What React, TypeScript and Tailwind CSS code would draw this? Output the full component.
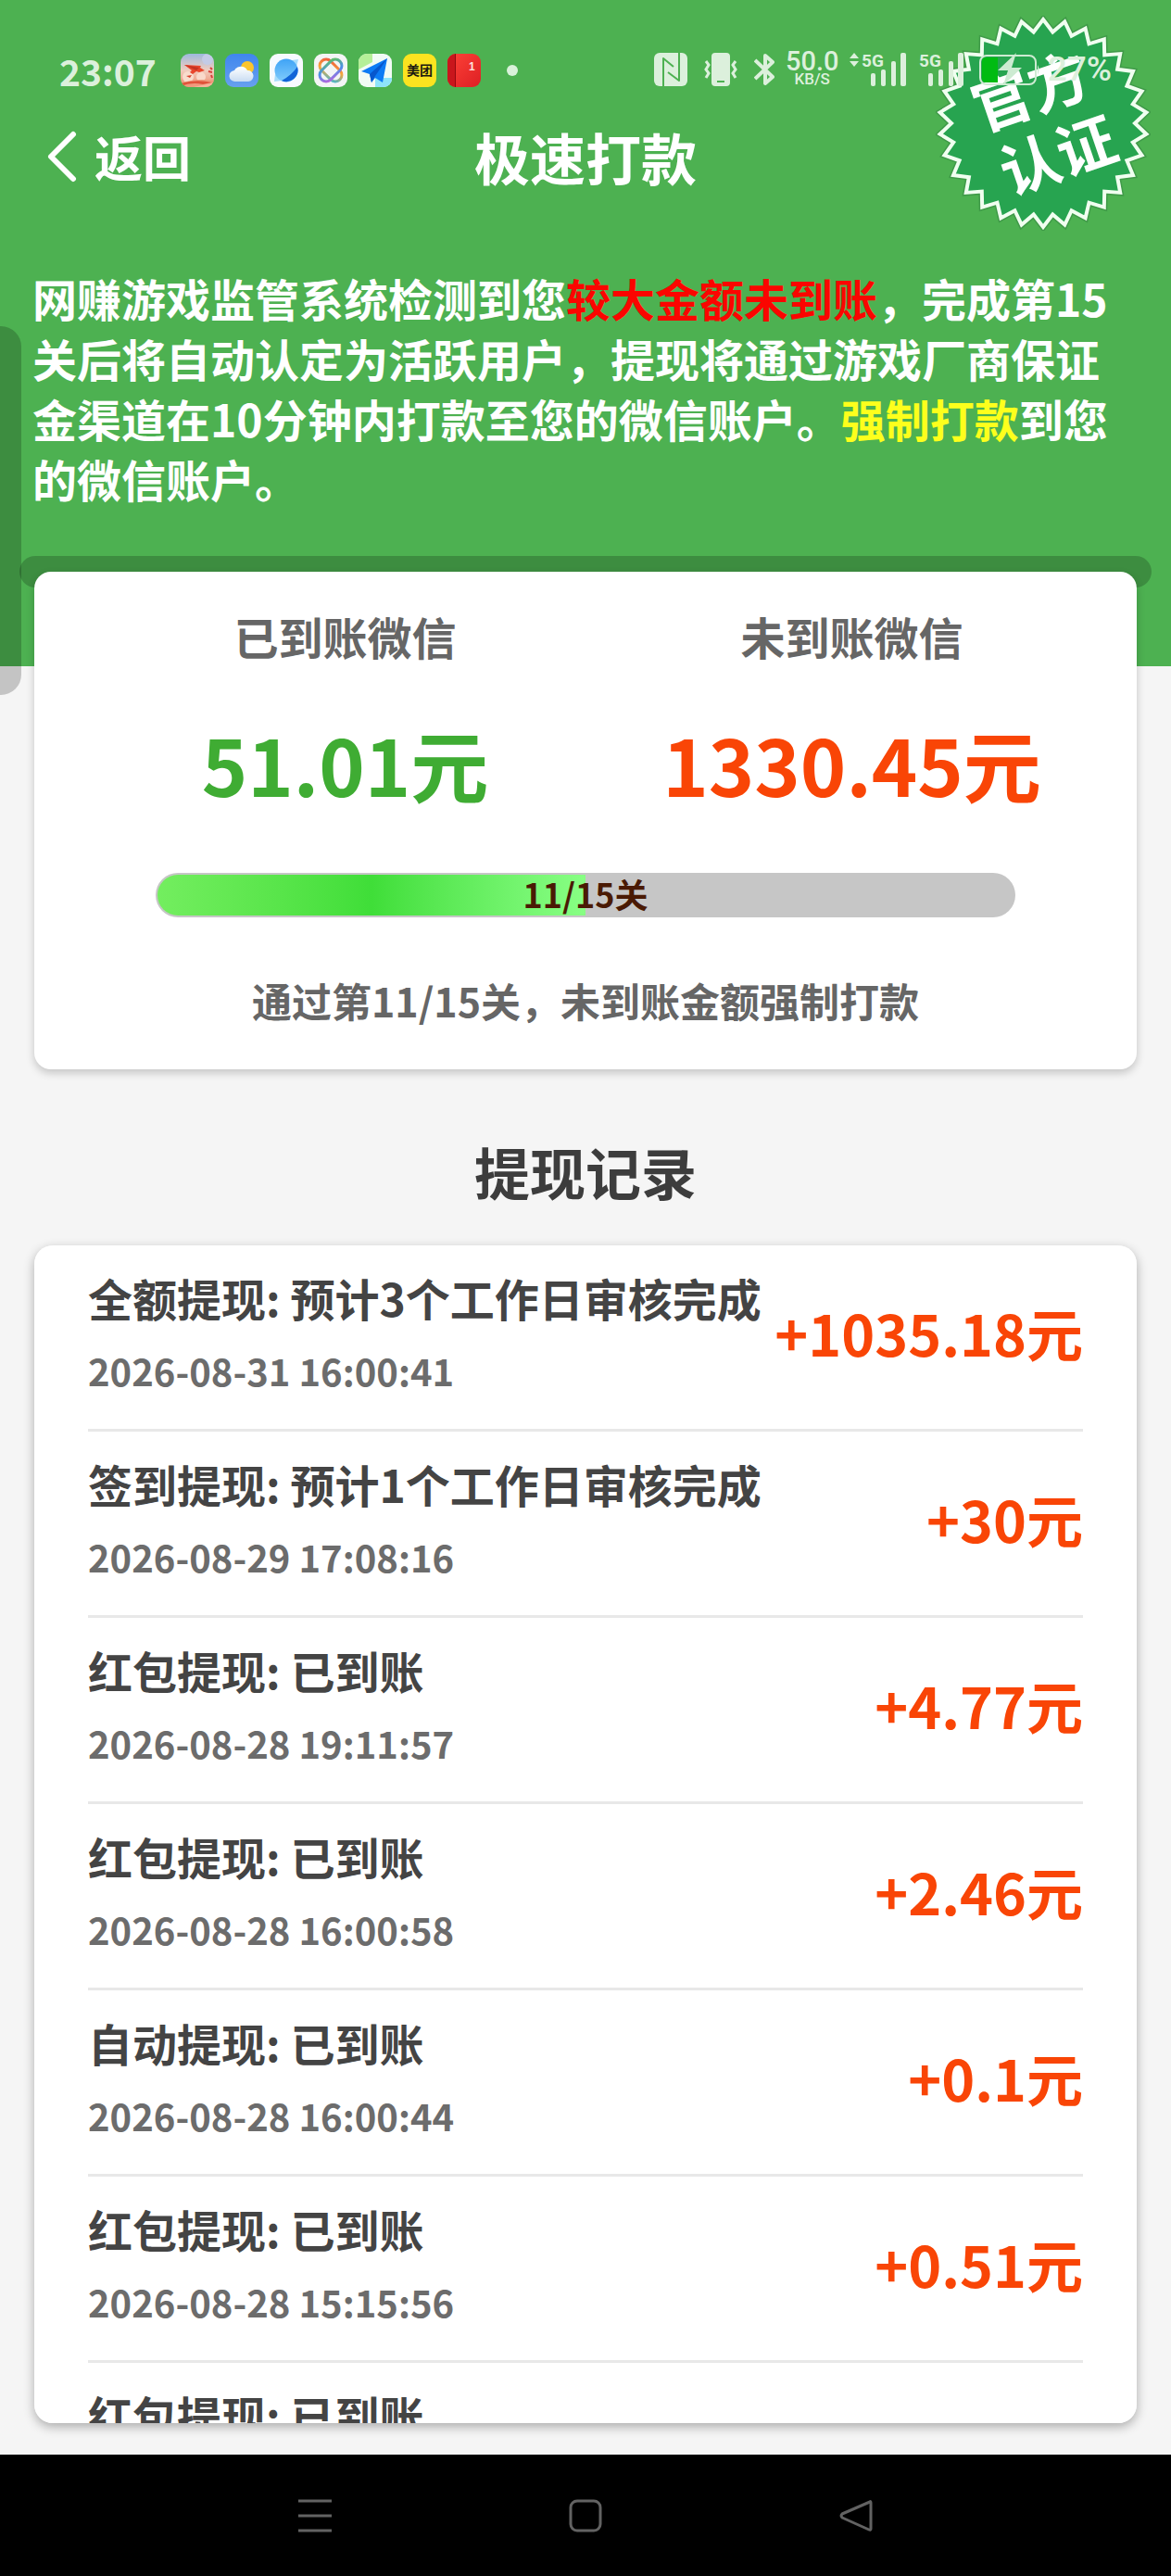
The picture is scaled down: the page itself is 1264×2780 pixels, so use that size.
import type { ReactNode } from 'react';

interface WithdrawRecord {
    title: string;
    time: string;
    amount: string;
}

const records: WithdrawRecord[] = [
    { title: '全额提现: 预计3个工作日审核完成', time: '2026-08-31 16:00:41', amount: '+1035.18元' },
    { title: '签到提现: 预计1个工作日审核完成', time: '2026-08-29 17:08:16', amount: '+30元' },
    { title: '红包提现: 已到账', time: '2026-08-28 19:11:57', amount: '+4.77元' },
    { title: '红包提现: 已到账', time: '2026-08-28 16:00:58', amount: '+2.46元' },
    { title: '自动提现: 已到账', time: '2026-08-28 16:00:44', amount: '+0.1元' },
    { title: '红包提现: 已到账', time: '2026-08-28 15:15:56', amount: '+0.51元' },
    { title: '红包提现: 已到账', time: '2026-08-28 15:02:10', amount: '+0.36元' },
];

function AppIcon({ children }: { children: ReactNode }) {
    return (
        <svg viewBox="0 0 36 36" className="h-9 w-9 rounded-[9px]" aria-hidden="true">
            {children}
        </svg>
    );
}

function NotificationIcons() {
    return (
        <div className="flex items-center gap-3">
            <AppIcon>
                <defs>
                    <linearGradient id="sky" x1="0" y1="0" x2="0" y2="1">
                        <stop offset="0" stopColor="#9db9dc" />
                        <stop offset="0.5" stopColor="#f1cdbf" />
                        <stop offset="1" stopColor="#ee8a6b" />
                    </linearGradient>
                </defs>
                <rect width="36" height="36" fill="url(#sky)" />
                <circle cx="29" cy="6" r="6" fill="#c3cbe6" />
                <circle cx="8" cy="25" r="6" fill="#f8dccd" />
                <circle cx="22" cy="25" r="5" fill="#f9d9cb" />
                <path d="M0 32 Q16 26 36 29 V36 H0 Z" fill="#ef9a7d" />
                <path d="M0 32 Q16 27 34 31 L24 33 Q12 30 0 35 Z" fill="#e0533a" />
                <path d="M14 36 L36 31 V36 Z" fill="#f6b49b" />
                <path d="M4 12 L22 13 L21 15 L26 18 L20 20 L17 19 L13 22 L10 20 L12 18 Z" fill="#e8452c" />
                <path d="M4 12 L20 15 L17 18 Z" fill="#c53422" />
                <path d="M6 24 L12 23 L10 26 Z" fill="#d8452f" />
                <path d="M32 15 l2 2 M30 19 l4 1 M33 23 l1 3" stroke="#d6403a" strokeWidth="2" />
            </AppIcon>
            <AppIcon>
                <defs>
                    <linearGradient id="weather" x1="0" y1="0" x2="0" y2="1">
                        <stop offset="0" stopColor="#3f86ee" />
                        <stop offset="1" stopColor="#67a0ef" />
                    </linearGradient>
                    <linearGradient id="cloud" x1="0" y1="0" x2="0" y2="1">
                        <stop offset="0" stopColor="#ffffff" />
                        <stop offset="1" stopColor="#c9dcf2" />
                    </linearGradient>
                </defs>
                <rect width="36" height="36" fill="url(#weather)" />
                <circle cx="24" cy="15" r="7" fill="#fcc52d" />
                <path
                    d="M11 30 a6 6 0 0 1 -1 -12 a8 8 0 0 1 14 0 a6 6 0 0 1 1 12 Z"
                    fill="url(#cloud)"
                />
            </AppIcon>
            <AppIcon>
                <defs>
                    <linearGradient id="globe" x1="0" y1="0" x2="0" y2="1">
                        <stop offset="0" stopColor="#3fa3f6" />
                        <stop offset="1" stopColor="#82ccfc" />
                    </linearGradient>
                </defs>
                <rect width="36" height="36" fill="#f7faff" />
                <path d="M24 7 L31 6 L29 14 Z M6 22 L5 30 L13 29 Z" fill="#a6dcfb" />
                <circle cx="18" cy="18" r="12.5" fill="url(#globe)" />
                <path d="M13 29 A12.5 12.5 0 0 0 30 14 Q24 23 13 29 Z" fill="#1264d8" />
            </AppIcon>
            <AppIcon>
                <defs>
                    <linearGradient id="knotA" x1="0" y1="0" x2="1" y2="1">
                        <stop offset="0" stopColor="#f0533c" />
                        <stop offset="0.5" stopColor="#f6a63c" />
                        <stop offset="1" stopColor="#39b8d8" />
                    </linearGradient>
                    <linearGradient id="knotB" x1="1" y1="0" x2="0" y2="1">
                        <stop offset="0" stopColor="#62c35a" />
                        <stop offset="0.5" stopColor="#4b8fe8" />
                        <stop offset="1" stopColor="#c064dc" />
                    </linearGradient>
                </defs>
                <rect width="36" height="36" fill="#f3f5f5" />
                <g fill="none" strokeWidth="3">
                    <rect x="4" y="11" width="28" height="14" rx="7" transform="rotate(45 18 18)" stroke="url(#knotA)" />
                    <rect x="4" y="11" width="28" height="14" rx="7" transform="rotate(-45 18 18)" stroke="url(#knotB)" />
                </g>
            </AppIcon>
            <AppIcon>
                <rect width="36" height="36" fill="#f2fbf5" />
                <path d="M0 0 H15 V9 L0 17 Z" fill="#b5ef98" />
                <path d="M18 26 H36 V36 H18 Z" fill="#8ee4fb" />
                <path d="M31 5 L3 19 L12 22 L14 31 L18 26 L26 31 Z" fill="#0d7bf5" />
                <path d="M31 5 L12 22 L14 31 L18 24 Z" fill="#0757cd" />
            </AppIcon>
            <AppIcon>
                <rect width="36" height="36" fill="#fbe320" />
                <text
                    x="18"
                    y="23"
                    textAnchor="middle"
                    fill="#1a1a10"
                    className="font-['Noto_Sans_CJK_SC',sans-serif] text-[14px] font-bold"
                >
                    美团
                </text>
            </AppIcon>
            <AppIcon>
                <defs>
                    <linearGradient id="book" x1="0" y1="0" x2="1" y2="1">
                        <stop offset="0" stopColor="#ff4338" />
                        <stop offset="1" stopColor="#dd1f24" />
                    </linearGradient>
                </defs>
                <rect width="36" height="36" fill="url(#book)" />
                <rect width="9" height="36" fill="#c9161c" />
                <rect x="8" width="1" height="36" fill="#94090f" />
                <text x="23" y="18" fill="#ffe3df" className="font-['Liberation_Sans',sans-serif] text-[12px] font-bold">
                    1
                </text>
            </AppIcon>
            <span className="ml-4 h-3 w-3 rounded-full bg-[#d9f2da]" />
        </div>
    );
}

function Signal({ arrows = false }: { arrows?: boolean }) {
    return (
        <svg
            viewBox={arrows ? '-14 0 61 36' : '0 0 47 36'}
            className={arrows ? 'h-9 w-[61px] overflow-visible' : 'h-9 w-[47px] overflow-visible'}
            fill="currentColor"
            aria-hidden="true"
        >
            {arrows && <path d="M-14 6 L-9 0 L-4 6 Z M-14 9 L-9 15 L-4 9 Z" />}
            <text x="-1" y="15" className="font-['Roboto',sans-serif] text-[19px] font-bold">
                5G
            </text>
            <rect x="9" y="22" width="5" height="14" rx="2" />
            <rect x="20" y="18" width="5" height="18" rx="2" />
            <rect x="31" y="9" width="5" height="27" rx="2" />
            <rect x="41" y="0" width="6" height="36" rx="2" />
        </svg>
    );
}

function StatusIcons() {
    return (
        <div className="flex items-center">
            <svg viewBox="0 0 36 36" className="h-9 w-9" aria-hidden="true">
                <rect width="36" height="36" rx="6" fill="#dcf0dc" />
                <path
                    d="M10 36 V6 L21 15 M27 0 V30 L15 21"
                    fill="none"
                    stroke="#4db151"
                    strokeWidth="2"
                    strokeLinejoin="round"
                />
            </svg>
            <svg viewBox="0 0 36 36" className="ml-[18px] h-9 w-9" aria-hidden="true">
                <rect x="8" width="20" height="36" rx="4" fill="#dcf0dc" />
                <rect x="14" y="30" width="8" height="2" fill="#4db151" />
                <path
                    d="M2 9 L5 13 L2 18 L5 22 L2 27 M34 9 L31 13 L34 18 L31 22 L34 27"
                    fill="none"
                    stroke="#dcf0dc"
                    strokeWidth="3"
                />
            </svg>
            <svg viewBox="0 0 22 36" className="ml-[18px] h-9 w-[22px]" aria-hidden="true">
                <path
                    d="M1 8 L20 26 L12 33 V3 L20 10 L1 28"
                    fill="none"
                    stroke="#dcf0dc"
                    strokeWidth="4"
                    strokeLinejoin="round"
                />
            </svg>
            <div className="ml-3 flex w-[58px] flex-col items-center font-['Roboto',sans-serif] font-medium">
                <span className="text-[29px] leading-[21px]">50.0</span>
                <span className="text-[17px] leading-[17px]">KB/S</span>
            </div>
            <div className="ml-[11px] flex gap-[15px]">
                <Signal arrows />
                <Signal />
            </div>
            <svg viewBox="0 0 66 36" className="ml-[17px] h-9 w-[66px]" aria-hidden="true">
                <rect x="1" y="3" width="60" height="31" rx="7" fill="none" stroke="#cdebd2" strokeWidth="2" />
                <path d="M63 13 Q66 18 63 24 Z" fill="#cdebd2" />
                <path d="M3 9 Q3 5 8 5 H20 V32 H8 Q3 32 3 28 Z" fill="#00bb12" />
                <path d="M40 0 L20 19 H31 L26 35 L46 16 H35 Z" fill="#cdebd2" />
            </svg>
            <span className="ml-[8px] font-['Roboto',sans-serif] text-[37px] leading-9 font-medium">27%</span>
        </div>
    );
}

// 30-point star, alternating between the outer and the inner radius
const sealPoints = Array.from({ length: 60 }, (_, i) => {
    const r = i % 2 === 0 ? 112 : 99;
    const a = (i * Math.PI) / 30;
    return `${(116 + r * Math.sin(a)).toFixed(1)},${(116 - r * Math.cos(a)).toFixed(1)}`;
}).join(' ');

function OfficialSeal() {
    return (
        <svg viewBox="0 0 232 232" className="absolute top-[17px] right-[22px] h-[232px] w-[232px]">
            <polygon points={sealPoints} fill="none" stroke="#3f9a48" strokeWidth="7" />
            <polygon points={sealPoints} fill="#27a450" stroke="#f0fff0" strokeWidth="4" />
            <g
                transform="rotate(-19 116 116)"
                fill="#ffffff"
                textAnchor="middle"
                className="font-['Noto_Sans_CJK_SC',sans-serif] text-[64px] font-bold"
            >
                <text x="114" y="103">官方</text>
                <text x="120" y="178">认证</text>
            </g>
        </svg>
    );
}

function BalanceColumn({ label, value, valueClass }: { label: string; value: string; valueClass: string }) {
    return (
        <div className="flex flex-col items-center">
            <span className="text-[48px] leading-[60px] font-bold text-[#666666]">{label}</span>
            <span className={`mt-[58px] text-[84px] leading-[100px] font-bold whitespace-nowrap ${valueClass}`}>
                {value}
            </span>
        </div>
    );
}

function BalanceCard() {
    return (
        <section className="relative mx-[37px] -mt-[102px] rounded-[18px] bg-white pt-[39px] pb-[46px] shadow-[0_4px_10px_rgba(0,0,0,0.2)]">
            <div className="grid grid-cols-2 pr-[34px] pl-[62px]">
                <BalanceColumn label="已到账微信" value="51.01元" valueClass="text-[#3fac33]" />
                <BalanceColumn label="未到账微信" value="1330.45元" valueClass="text-[#f94506]" />
            </div>
            <div
                role="progressbar"
                aria-label="关卡进度"
                aria-valuemin={0}
                aria-valuemax={15}
                aria-valuenow={11}
                className="relative mx-[131px] mt-[68px] h-12 rounded-full bg-[#c6c6c6] p-[2px]"
            >
                <div className="h-full w-1/2 rounded-l-full rounded-r-[14px] bg-linear-to-r from-[#73ee5f] via-[#3fde38] to-[#88ff84]" />
                <span className="absolute inset-0 text-center text-[36px] leading-[44px] font-bold text-[#4a1a04]">
                    11/15关
                </span>
            </div>
            <p className="mt-[60px] text-center text-[43px] leading-[58px] font-bold text-[#666666]">
                通过第11/15关，未到账金额强制打款
            </p>
        </section>
    );
}

function RecordRow({ record }: { record: WithdrawRecord }) {
    return (
        <li className="flex h-[201px] shrink-0 items-center justify-between border-b-[3px] border-[#e8e8e8] pb-[10px] whitespace-nowrap">
            <div className="flex flex-col gap-[22px]">
                <span className="text-[48px] leading-[60px] font-bold text-[#444444]">{record.title}</span>
                <time className="text-[40px] leading-[54px] font-bold text-[#6c6c6c]">{record.time}</time>
            </div>
            <span className="text-[61px] leading-[72px] font-bold text-[#f94506]">{record.amount}</span>
        </li>
    );
}

function NavigationBar() {
    return (
        <nav className="flex h-[131px] shrink-0 items-center justify-center gap-[256px] bg-black text-[#626262]">
            <button type="button" aria-label="最近任务">
                <svg viewBox="0 0 36 36" className="h-9 w-9" stroke="currentColor" strokeWidth="3">
                    <path d="M0 2 H36 M0 18 H36 M0 34 H36" />
                </svg>
            </button>
            <button type="button" aria-label="主屏幕">
                <svg viewBox="0 0 36 36" className="h-9 w-9" fill="none" stroke="currentColor" strokeWidth="3">
                    <rect x="2" y="2" width="32" height="32" rx="7" />
                </svg>
            </button>
            <button type="button" aria-label="返回上一页">
                <svg
                    viewBox="0 0 36 36"
                    className="h-9 w-9"
                    fill="none"
                    stroke="currentColor"
                    strokeWidth="3"
                    strokeLinejoin="round"
                >
                    <path d="M33 3 Q34 2 34 4 V32 Q34 34 32 33 L3 20 Q1 18 3 16 Z" />
                </svg>
            </button>
        </nav>
    );
}

export default function App() {
    return (
        <div className="relative flex h-screen flex-col overflow-hidden bg-[#f5f5f5] font-['Noto_Sans_CJK_SC',sans-serif]">
            <header className="relative shrink-0 bg-[#4db151] pb-[85px]">
                <OfficialSeal />
                <div className="relative flex h-[94px] items-end justify-between pr-[64px] pl-[64px] text-[#dcf0dc]">
                    <div className="flex items-center gap-[26px]">
                        <span className="text-[39px] leading-9 font-bold">23:07</span>
                        <NotificationIcons />
                    </div>
                    <StatusIcons />
                </div>
                <div className="mt-[25px] grid h-[100px] grid-cols-3 items-center text-white">
                    <button type="button" className="ml-[50px] flex items-center gap-[18px] justify-self-start">
                        <svg
                            viewBox="0 0 34 56"
                            className="h-14 w-[34px]"
                            fill="none"
                            stroke="currentColor"
                            strokeWidth="6"
                            strokeLinecap="round"
                            strokeLinejoin="round"
                            aria-hidden="true"
                        >
                            <path d="M29 4 L5 28 L29 52" />
                        </svg>
                        <span className="text-[52px] leading-[60px] font-bold">返回</span>
                    </button>
                    <h1 className="text-center text-[60px] leading-[72px] font-bold">极速打款</h1>
                </div>
                <p className="mt-[70px] pr-[60px] pl-[35px] text-[48px] leading-[65px] font-bold text-white">
                    网赚游戏监管系统检测到您<span className="text-[#fb0500]">较大金额未到账</span>
                    ，完成第15关后将自动认定为活跃用户，提现将通过游戏厂商保证金渠道在10分钟内打款至您的微信账户。
                    <span className="text-[#fdff1c]">强制打款</span>到您的微信账户。
                </p>
                <div className="mx-[21px] mt-[51px] h-[34px] rounded-full bg-black/20" />
            </header>

            <BalanceCard />

            <h2 className="mt-[72px] mb-[42px] text-center text-[60px] leading-[76px] font-bold text-[#3d3d3d]">
                提现记录
            </h2>

            <ul className="mx-[37px] mb-[34px] flex min-h-0 flex-1 flex-col overflow-y-auto rounded-[20px] bg-white px-[58px] shadow-[0_4px_12px_rgba(0,0,0,0.3)] [scrollbar-width:none]">
                {records.map((record) => (
                    <RecordRow key={record.time} record={record} />
                ))}
            </ul>

            <NavigationBar />

            {/* floating edge handle */}
            <div className="absolute top-[352px] left-0 h-[398px] w-[23px] rounded-r-[22px] bg-black/20" />
        </div>
    );
}
